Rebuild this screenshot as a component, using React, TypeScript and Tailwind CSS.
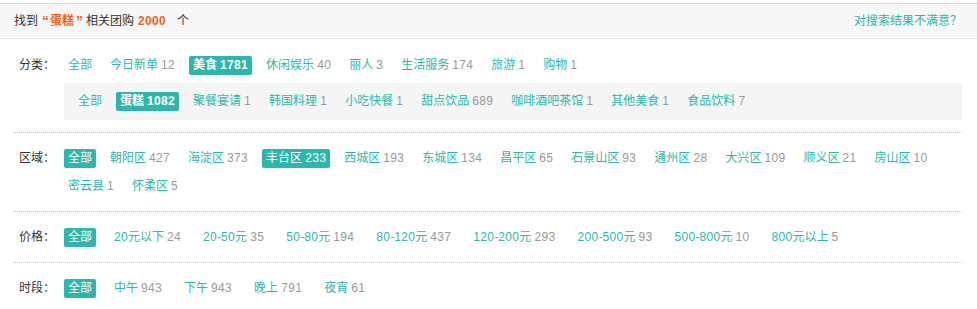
import React from "react";

type Item = { name: string; count?: number; active?: boolean; bold?: boolean };

const categories: Item[] = [
  { name: "全部" },
  { name: "今日新单", count: 12 },
  { name: "美食", count: 1781, active: true, bold: true },
  { name: "休闲娱乐", count: 40 },
  { name: "丽人", count: 3 },
  { name: "生活服务", count: 174 },
  { name: "旅游", count: 1 },
  { name: "购物", count: 1 },
];

const subCategories: Item[] = [
  { name: "全部" },
  { name: "蛋糕", count: 1082, active: true, bold: true },
  { name: "聚餐宴请", count: 1 },
  { name: "韩国料理", count: 1 },
  { name: "小吃快餐", count: 1 },
  { name: "甜点饮品", count: 689 },
  { name: "咖啡酒吧茶馆", count: 1 },
  { name: "其他美食", count: 1 },
  { name: "食品饮料", count: 7 },
];

const regions: Item[] = [
  { name: "全部", active: true },
  { name: "朝阳区", count: 427 },
  { name: "海淀区", count: 373 },
  { name: "丰台区", count: 233, active: true },
  { name: "西城区", count: 193 },
  { name: "东城区", count: 134 },
  { name: "昌平区", count: 65 },
  { name: "石景山区", count: 93 },
  { name: "通州区", count: 28 },
  { name: "大兴区", count: 109 },
  { name: "顺义区", count: 21 },
  { name: "房山区", count: 10 },
  { name: "密云县", count: 1 },
  { name: "怀柔区", count: 5 },
];

const prices: Item[] = [
  { name: "全部", active: true },
  { name: "20元以下", count: 24 },
  { name: "20-50元", count: 35 },
  { name: "50-80元", count: 194 },
  { name: "80-120元", count: 437 },
  { name: "120-200元", count: 293 },
  { name: "200-500元", count: 93 },
  { name: "500-800元", count: 10 },
  { name: "800元以上", count: 5 },
];

const times: Item[] = [
  { name: "全部", active: true },
  { name: "中午", count: 943 },
  { name: "下午", count: 943 },
  { name: "晚上", count: 791 },
  { name: "夜宵", count: 61 },
];

function Txt({ text }: { text: string }) {
  const parts = text.split(/([0-9]+)/).filter((p) => p.length > 0);
  return (
    <>
      {parts.map((p, i) =>
        /^[0-9]+$/.test(p) ? (
          <span key={i} className="tracking-[0.33px]">
            {p}
          </span>
        ) : (
          <React.Fragment key={i}>{p}</React.Fragment>
        )
      )}
    </>
  );
}

function Sp() {
  return <span className="tracking-[-0.33px]"> </span>;
}

function Tag({ item, wide }: { item: Item; wide?: boolean }) {
  const spacing = wide ? "mr-[14px]" : "mr-[10px]";
  if (item.active) {
    return (
      <span
        className={`${spacing} inline-block h-[19px] px-1 leading-[19px] rounded-[2px] bg-[#2bb8aa] text-white whitespace-nowrap ${
          item.bold ? "font-bold" : ""
        }`}
      >
        <Txt text={item.name} />
        {item.count !== undefined && (
          <>
            <Sp />
            <Txt text={String(item.count)} />
          </>
        )}
      </span>
    );
  }
  return (
    <span className={`${spacing} inline-block h-[19px] px-1 leading-[19px] text-[#2bb8aa] whitespace-nowrap`}>
      <Txt text={item.name} />
      {item.count !== undefined && (
        <span className="text-[#999]">
          <Sp />
          <Txt text={String(item.count)} />
        </span>
      )}
    </span>
  );
}

function Label({ text }: { text: string }) {
  return (
    <div className="w-[50px] shrink-0 pl-[5px] h-[19px] leading-[19px] text-[#333]">{text}</div>
  );
}

export default function App() {
  return (
    <div className="w-[977px] h-[309px] bg-white pt-[3px] text-[12px] font-['Liberation_Sans','Noto_Sans_CJK_SC',sans-serif] overflow-hidden">
      <div className="flex items-center justify-between h-[36px] border-t border-b border-t-[#d9d9d9] border-b-[#e8e8e8] bg-[#f7f7f7] pl-[14px] pr-[15px]">
        <div className="text-[#333] whitespace-nowrap flex items-center">
          <span>找到</span>
          <span className="inline-block w-[12px] text-right pr-[1px] text-[14px] leading-[14px] font-bold text-[#f76120]">“</span>
          <span className="font-bold text-[#f76120]">蛋糕</span>
          <span className="inline-block w-[12px] text-left pl-[2px] text-[14px] leading-[14px] font-bold text-[#f76120]">”</span>
          <span>相关团购</span>
          <span className="inline-block ml-[4px] mr-[11px] font-bold text-[#f76120] tracking-[0.33px]">2000</span>
          <span>个</span>
        </div>
        <a className="text-[#2bb8aa]">对搜索结果不满意？</a>
      </div>

      <div className="ml-[14px] mr-[15px]">
        <div className="pt-[17px] pb-[12px] border-b border-dotted border-[#ccc]">
          <div className="flex">
            <Label text="分类：" />
            <div className="flex-1">
              <div className="flex flex-wrap">
                {categories.map((c) => (
                  <Tag key={c.name} item={c} />
                ))}
              </div>
              <div className="mt-[8px] bg-[#f5f5f5] py-[9px] px-[10px] flex flex-wrap">
                {subCategories.map((c) => (
                  <Tag key={c.name} item={c} />
                ))}
              </div>
            </div>
          </div>
        </div>

        <div className="pt-[16px] pb-[15px] border-b border-dotted border-[#ccc]">
          <div className="flex">
            <Label text="区域：" />
            <div className="flex-1 flex flex-wrap gap-y-[9px]">
              {regions.map((c) => (
                <Tag key={c.name} item={c} />
              ))}
            </div>
          </div>
        </div>

        <div className="pt-[16px] pb-[15px] border-b border-dotted border-[#ccc]">
          <div className="flex">
            <Label text="价格：" />
            <div className="flex-1 flex flex-wrap gap-y-[9px]">
              {prices.map((c) => (
                <Tag key={c.name} item={c} wide />
              ))}
            </div>
          </div>
        </div>

        <div className="pt-[16px] pb-[15px]">
          <div className="flex">
            <Label text="时段：" />
            <div className="flex-1 flex flex-wrap gap-y-[9px]">
              {times.map((c) => (
                <Tag key={c.name} item={c} wide />
              ))}
            </div>
          </div>
        </div>
      </div>
    </div>
  );
}
